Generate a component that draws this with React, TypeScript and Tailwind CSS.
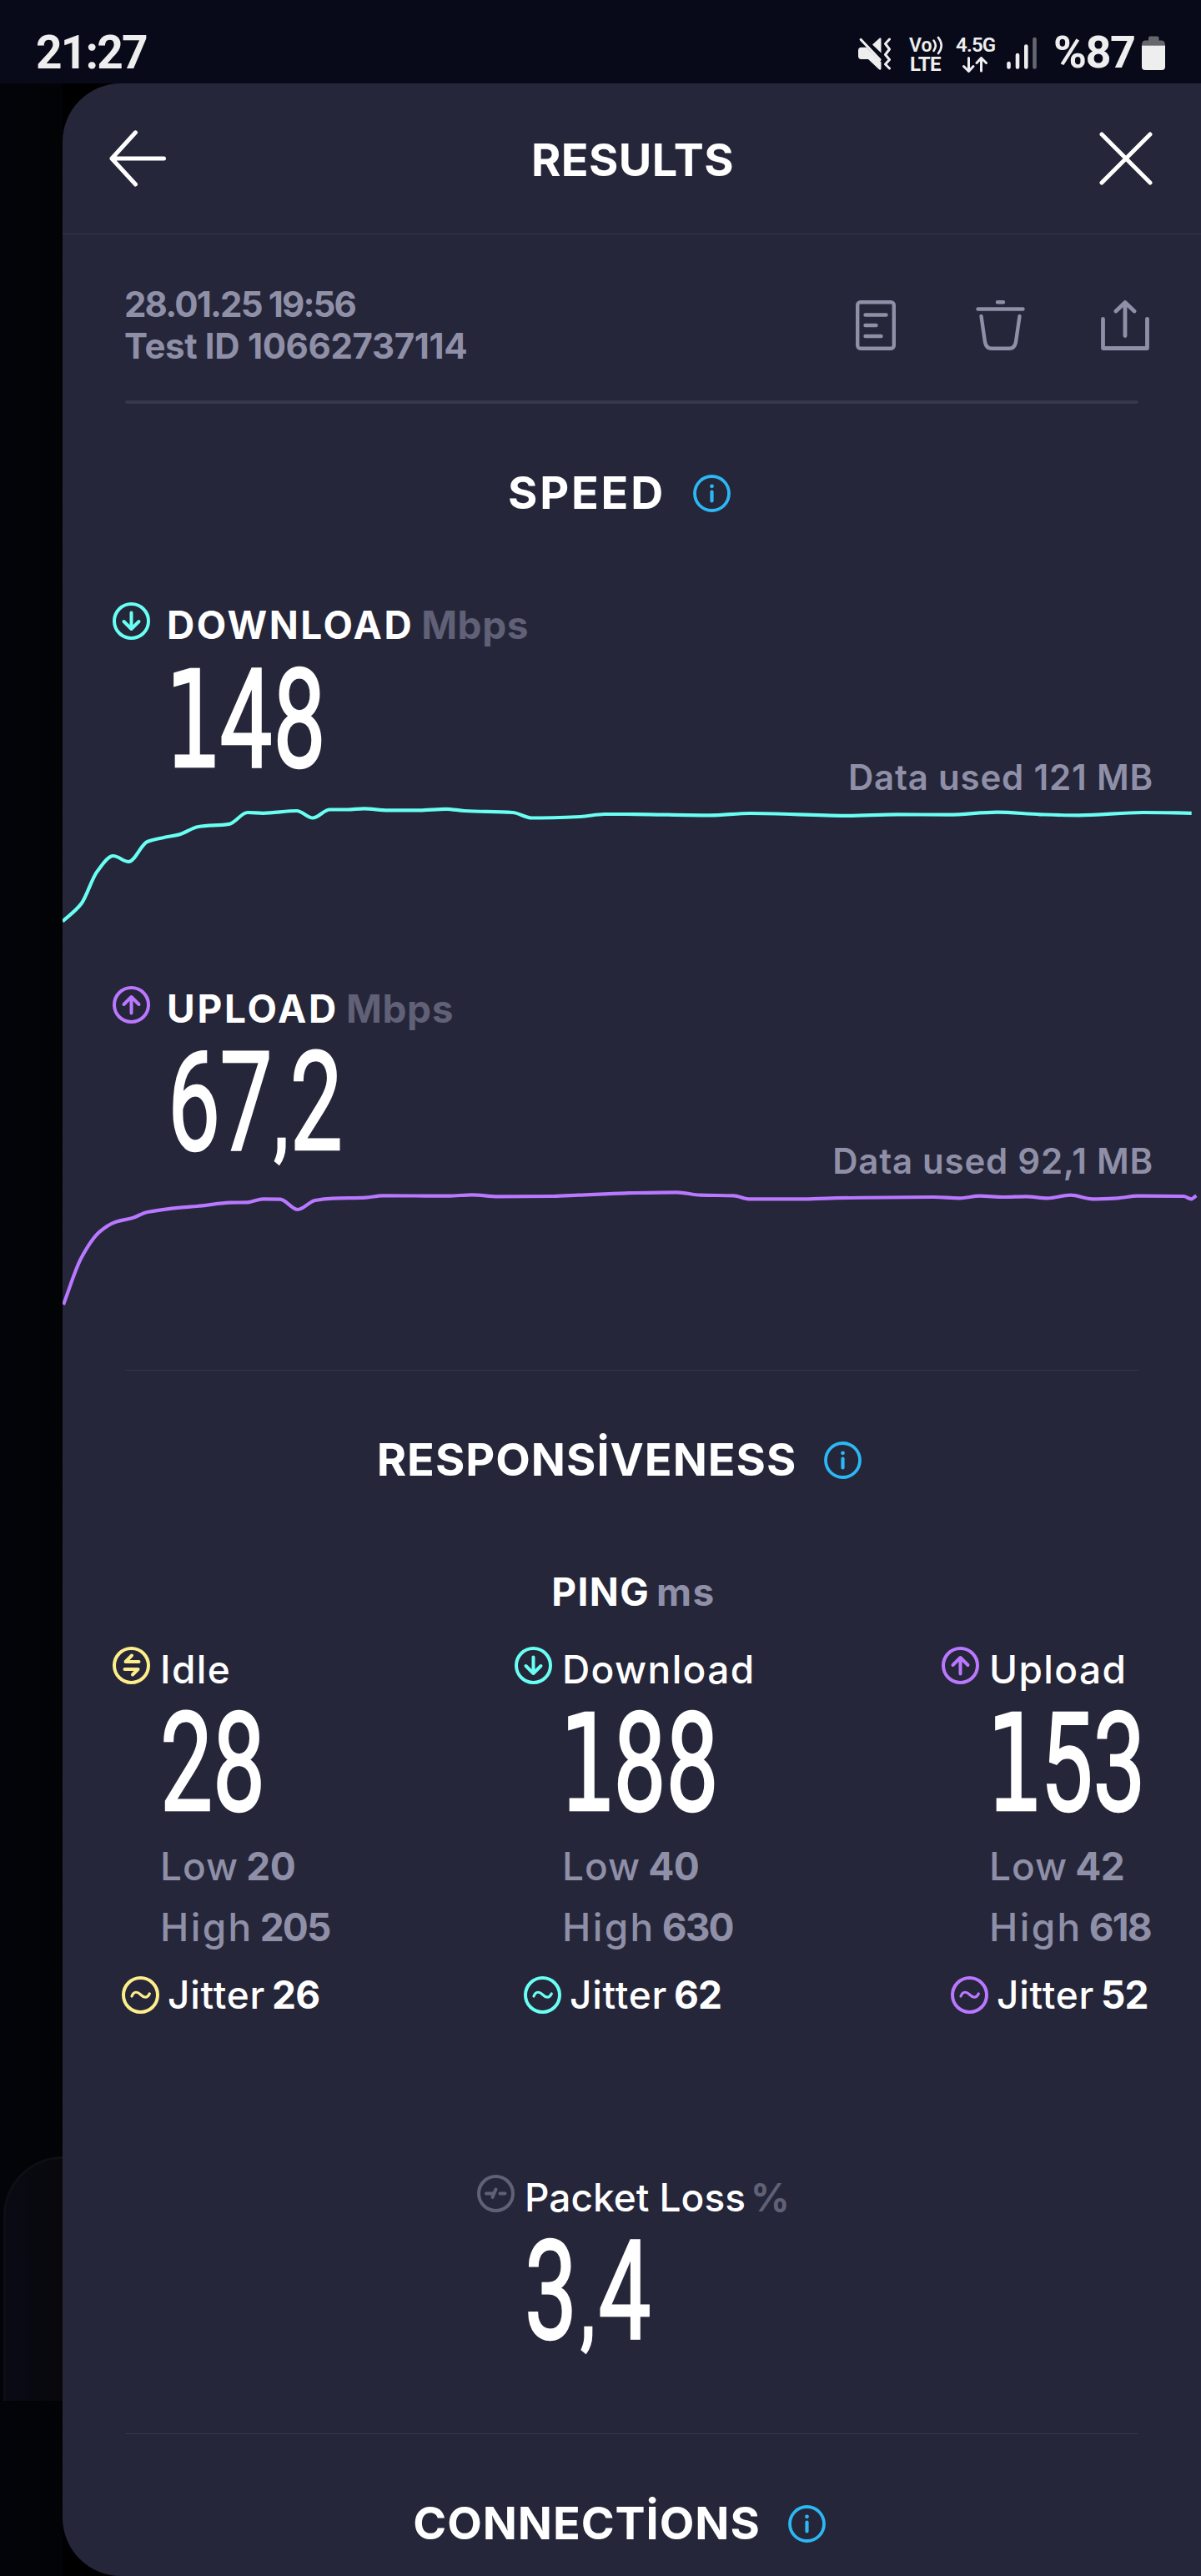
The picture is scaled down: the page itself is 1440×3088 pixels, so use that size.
import React from 'react';

type Point = [number, number];

const downloadPoints: Point[] = [
  [75, 1104.5], [97.4, 1083.4], [116.3, 1045], [135.7, 1026], [154.2, 1033], [176.6, 1009], [196.4, 1004],
  [215, 1000.4], [238, 991], [274.8, 987.8], [296.8, 974], [315.3, 974.8], [355.8, 972], [375, 980.5],
  [395.4, 970.5], [416.5, 970.5], [436.3, 969.4], [465, 971.3], [502, 971.3], [535, 969.8], [557, 972],
  [614.6, 974], [637.5, 980.5], [696, 979], [724.6, 976], [750, 976], [851, 977.4], [899.6, 975],
  [1014, 977.8], [1075.7, 976.3], [1137, 976.7], [1195.4, 973.6], [1247, 976.3], [1293.6, 977.4],
  [1370.6, 974], [1428.7, 974.8],
];

const uploadPoints: Point[] = [
  [76, 1564], [97.4, 1508], [119.4, 1476.7], [138.3, 1465], [159, 1460], [176.6, 1453], [218.5, 1447.3],
  [236, 1446], [275.7, 1441.7], [296.8, 1441.3], [315.3, 1437.3], [336, 1437.7], [357, 1450], [377.8, 1439],
  [399, 1436.7], [438.5, 1435.7], [458.3, 1433.3], [537.6, 1433.7], [566, 1432.3], [597, 1434.3],
  [663, 1434], [693.8, 1432.7], [750, 1430.3], [811.6, 1429.3], [840, 1432.7], [879.8, 1433.3],
  [897.4, 1437.3], [961, 1437.3], [996.5, 1436.3], [1119.7, 1435], [1150.5, 1436.3], [1174.7, 1433.7],
  [1203.3, 1435], [1229.8, 1434.3], [1256, 1436.3], [1283.5, 1432.7], [1310, 1437.3], [1339.8, 1436.3],
  [1364, 1433.7], [1419, 1434], [1428.3, 1437.3], [1434.4, 1433.3],
];

// Monotone smoothing: flat at every local peak, so the line never overshoots a sample
function smoothPath(pts: Point[]) {
  const slope = (i: number) => {
    if (i === 0 || i === pts.length - 1) return null;
    const a = (pts[i][1] - pts[i - 1][1]) / (pts[i][0] - pts[i - 1][0]);
    const b = (pts[i + 1][1] - pts[i][1]) / (pts[i + 1][0] - pts[i][0]);
    return a * b <= 0 ? 0 : (2 * a * b) / (a + b);
  };
  let d = `M${pts[0][0]} ${pts[0][1]}`;
  for (let i = 1; i < pts.length; i++) {
    const [x0, y0] = pts[i - 1];
    const [x1, y1] = pts[i];
    const h = (x1 - x0) / 3;
    const straight = (y1 - y0) / (x1 - x0);
    const s0 = slope(i - 1) ?? straight;
    const s1 = slope(i) ?? straight;
    d += ` C${x0 + h} ${y0 + s0 * h} ${x1 - h} ${y1 - s1 * h} ${x1} ${y1}`;
  }
  return d;
}

const glyphs = {
  down: 'M22.5 12.5V32 M13.5 23L22.5 32L31.5 23',
  up: 'M22.5 32.5V13 M13.5 22L22.5 13L31.5 22',
  idle: 'M31.5 18H15.5L23 10.5 M14.5 27H30.5L24 33.5',
  wave: 'M12 24C14.5 17.5 19 18.5 22.5 22S30.5 27 33.3 21',
  loss: 'M11 22.5H19 M18.5 27L22.5 17.5 M27.5 22.5H33.5',
};

function CircleIcon({ glyph, className }: { glyph: keyof typeof glyphs; className: string }) {
  return (
    <svg viewBox="0 0 45 45" className={`h-[45px] w-[45px] shrink-0 ${className}`} fill="none" stroke="currentColor" strokeLinecap="round" strokeLinejoin="round">
      <circle cx="22.5" cy="22.5" r="20.5" strokeWidth="4" />
      <path d={glyphs[glyph]} strokeWidth={glyph === 'wave' ? 3.2 : 4} />
    </svg>
  );
}

function InfoIcon() {
  return (
    <svg viewBox="0 0 45 45" className="h-[45px] w-[45px] shrink-0 text-[#2bb8f5]" fill="none" stroke="currentColor">
      <circle cx="22.5" cy="22.5" r="20.5" strokeWidth="3.8" />
      <circle cx="22.5" cy="13.8" r="2.4" fill="currentColor" stroke="none" />
      <path d="M22.5 20.5V31.5" strokeWidth="4.2" strokeLinecap="round" />
    </svg>
  );
}

// Tall, narrow figures; the 1 comes from a face that has a foot
function BigNumber({ value, className = '' }: { value: string; className?: string }) {
  return (
    <p className={`h-[120px] w-0 origin-left scale-x-[0.68] font-['Roboto',sans-serif] text-[165px] leading-[121px] font-normal whitespace-nowrap text-white [-webkit-text-stroke:2.5px_white] ${className}`}>
      {value.split(/([1,])/).map((part, i) => {
        if (part === '1') {
          return (
            <span key={i} className="-mx-[6px] font-['DejaVu_Sans',sans-serif] text-[161px]">1</span>
          );
        }
        if (part === ',') return <span key={i} className="px-[4px] text-[108px] font-semibold">,</span>;
        return part;
      })}
    </p>
  );
}

function SectionTitle({ text, className }: { text: string; className: string }) {
  return (
    <div className="flex h-[54px] items-center justify-center gap-[33px] pr-[30px]">
      <h2 className={`text-[54px] leading-[54px] font-bold text-white ${className}`}>{text}</h2>
      <InfoIcon />
    </div>
  );
}

function SpeedHeader({ glyph, color, label, tracking }: { glyph: 'down' | 'up'; color: string; label: string; tracking: string }) {
  return (
    <div className="flex h-[45px] items-start pl-[60px]">
      <CircleIcon glyph={glyph} className={color} />
      <div className="mt-1 ml-5 flex gap-[9px] text-[46px] leading-[46px] font-bold">
        <span className={`text-white ${tracking}`}>{label}</span>
        <span className="tracking-[0.6px] text-[#606077]">Mbps</span>
      </div>
    </div>
  );
}

interface PingProps {
  glyph: 'idle' | 'down' | 'up';
  color: string;
  label: string;
  ping: string;
  low: string;
  high: string;
  jitter: string;
  width: string;
}

const pings: PingProps[] = [
  { glyph: 'idle', color: 'text-[#fdee8b]', label: 'Idle', ping: '28', low: '20', high: '205', jitter: '26', width: 'w-[482px]' },
  { glyph: 'down', color: 'text-[#6afff3]', label: 'Download', ping: '188', low: '40', high: '630', jitter: '62', width: 'w-[512px]' },
  { glyph: 'up', color: 'text-[#b978ff]', label: 'Upload', ping: '153', low: '42', high: '618', jitter: '52', width: 'w-[260px]' },
];

function PingColumn({ glyph, color, label, ping, low, high, jitter, width }: PingProps) {
  return (
    <div className={`shrink-0 text-[46px] leading-[46px] font-medium ${width}`}>
      <div className="flex h-[45px] items-start gap-3">
        <CircleIcon glyph={glyph} className={color} />
        <span className="mt-1 tracking-[1.4px] text-white">{label}</span>
      </div>
      <div className="mt-[34px] pl-[57px]">
        <BigNumber value={ping} />
        <p className="mt-[41px] flex gap-[9px] text-[#8f8fa8]">
          <span className="tracking-[1px]">Low</span>
          <b className="font-bold tracking-[-0.5px]">{low}</b>
        </p>
        <p className="mt-[27px] flex gap-2 text-[#8f8fa8]">
          <span className="tracking-[2.4px]">High</span>
          <b className="font-bold tracking-[-1.8px]">{high}</b>
        </p>
      </div>
      <div className="mt-[36px] flex h-[45px] items-start pl-[11px]">
        <CircleIcon glyph="wave" className={color} />
        <p className="-mt-px ml-2.5 flex gap-2 text-white">
          <span className="tracking-[0.75px]">Jitter</span>
          <b className="font-bold tracking-[-0.8px]">{jitter}</b>
        </p>
      </div>
    </div>
  );
}

function StatusBar() {
  return (
    <div className="flex h-[100px] shrink-0 items-start justify-between bg-[#090a19] pl-[43px] font-['Roboto',sans-serif] text-[#eeeeee]">
      <span className="mt-[36px] text-[55px] leading-[54px] font-bold tracking-[-1.8px]">21:27</span>
      <div className="flex items-start pt-[43px] pr-[43px]">
        {/* Muted, vibrating */}
        <svg viewBox="0 0 39 41" className="h-[41px] w-[39px]" fill="currentColor">
          <path d="M0 17.5C0 15 1.5 13.8 3.5 13.8H10L27.5 31.5V39C27.3 41 26 41 25 40.3L12 28H3.5C1.5 28 0 26.8 0 24.5Z" />
          <path d="M17 10.5L25.5 2.8C26.6 2 27.5 2.5 27.5 3.8V20.5Z" />
          <path d="M3.2 4.5L26 28.5" stroke="currentColor" strokeWidth="3.2" strokeLinecap="round" />
          <path d="M37.5 4L32.5 9.5L37.5 16L32.5 22.5L37.5 28.5L32.5 34L37.5 39" fill="none" stroke="currentColor" strokeWidth="3" strokeLinecap="round" strokeLinejoin="round" />
        </svg>
        <div className="ml-[22px] w-[42px] text-[23px] leading-[23px] font-semibold">
          <div className="flex">
            <span>Vo</span>
            <svg viewBox="0 0 14 23" className="h-[23px] w-[14px]" fill="none" stroke="currentColor" strokeWidth="2.6" strokeLinecap="round">
              <path d="M2.5 5.5Q7 11.5 2.5 18" />
              <path d="M8 2Q15.5 11.5 8 21" />
            </svg>
          </div>
          <p className="pl-px text-[24px] font-bold tracking-[-0.6px]">LTE</p>
        </div>
        <div className="ml-[14px] w-[46px]">
          <p className="text-[24px] leading-[23px] font-semibold tracking-[-0.8px]">4.5G</p>
          <svg viewBox="0 0 30 19" className="mt-[2px] ml-2 h-[19px] w-[30px]" fill="none" stroke="currentColor" strokeWidth="3" strokeLinecap="round" strokeLinejoin="round">
            <path d="M7.5 1.5V17M1.5 11.5L7.5 17.5L13 11.5" />
            <path d="M22.5 17V2M17 7.5L22.5 1.5L28.5 7.5" />
          </svg>
        </div>
        <svg viewBox="0 0 36 40" className="ml-[15px] h-[40px] w-[36px]" stroke="currentColor" strokeWidth="4.6" strokeLinecap="round">
          <path d="M2.5 33V37.5M13 23V37.5M23.3 12.5V37.5" />
          <path d="M33.5 4V37.5" stroke="#66666f" />
        </svg>
        <span className="-mt-[7px] ml-5 w-[98px] text-[54px] leading-[54px] font-bold tracking-[-1.5px]">%87</span>
        <svg viewBox="0 0 28 41" className="ml-2 h-[41px] w-[28px]">
          <path d="M8 5V2.5Q8 0.5 10 0.5H18.5Q20.5 0.5 20.5 2.5V5.5H24Q28 5.5 28 11.5H0Q0 5.5 4 5.5H8Z" fill="#66666f" />
          <path d="M0 11.5H28V37Q28 41 24 41H4Q0 41 0 37Z" fill="currentColor" />
        </svg>
      </div>
    </div>
  );
}

export default function App() {
  return (
    <div className="flex h-[3088px] w-[1440px] flex-col overflow-hidden bg-[#030408] font-['Inter',sans-serif]">
      <StatusBar />
      <div className="flex h-[2988px] bg-black">
        {/* Dimmed screen behind the sheet */}
        <div className="flex w-[75px] shrink-0 flex-col bg-linear-to-r from-[#03040a] to-[#020305] pt-[2485px] pl-1">
          <div className="h-[293px] w-[71px] rounded-tl-[75px] border-t-[3px] border-l-[3px] border-[#0e0f14] bg-linear-to-r from-[#090a14] to-[#08080c]" />
        </div>

        <main className="h-[2988px] w-[1365px] overflow-hidden rounded-l-[70px] bg-[#252639]">
          <header className="flex h-[181px] items-center justify-between border-b border-[#37374c] pr-[58px] pl-[56px] text-white">
            <svg viewBox="0 0 68 68" className="h-[68px] w-[68px]" fill="none" stroke="currentColor" strokeWidth="5" strokeLinecap="round" strokeLinejoin="round">
              <path d="M65.5 34H3M31.5 2.8L3 34L31.5 65" />
            </svg>
            <h1 className="mt-1 text-[54px] leading-[54px] font-bold tracking-[0.4px]">RESULTS</h1>
            <svg viewBox="0 0 64 64" className="h-[64px] w-[64px]" stroke="currentColor" strokeWidth="5" strokeLinecap="round">
              <path d="M3 3L61 61M61 3L3 61" />
            </svg>
          </header>

          <div className="flex h-[199px] items-start justify-between pt-[59px] pr-[62px] pl-[74px] text-[#8f8fa8]">
            <div className="text-[42px] leading-[50px] font-bold">
              <p className="tracking-[-1.85px]">28.01.25 19:56</p>
              <p className="tracking-[-0.35px]">Test ID 10662737114</p>
            </div>
            <div className="mt-5 flex items-start">
              <svg viewBox="0 0 48 60" className="h-[60px] w-[48px]" fill="none" stroke="currentColor" strokeWidth="4.4" strokeLinecap="round">
                <rect x="2.2" y="2.2" width="43.6" height="55.6" rx="3.5" />
                <path d="M11.5 17.5H36.5M11.5 30H24.5M11.5 43H30.5" />
              </svg>
              <svg viewBox="0 0 59 60" className="ml-24 h-[60px] w-[59px]" fill="none" stroke="currentColor" strokeWidth="4.4" strokeLinecap="round">
                <path d="M26 2.2H33M2.5 10.5H56.5" />
                <path d="M6.5 19L11 50Q12.5 57.8 19 57.8H40Q46.5 57.8 48 50L52.5 19" />
              </svg>
              <svg viewBox="0 0 58 60" className="ml-[91px] h-[60px] w-[58px]" fill="none" stroke="currentColor" strokeWidth="4.8" strokeLinecap="round" strokeLinejoin="round">
                <path d="M2.5 22.5V57.5H55.5V22.5M29 42.5V3M18 13L29 2.5L40 13" />
              </svg>
            </div>
          </div>
          <div className="mx-[75px] h-1 rounded-full bg-[#37374c]" />

          {/* Speed */}
          <section className="pt-20">
            <SectionTitle text="SPEED" className="tracking-[2.8px]" />

            <div className="mt-[104px]">
              <SpeedHeader glyph="down" color="text-[#6afff3]" label="DOWNLOAD" tracking="tracking-[2.5px]" />
              <div className="mt-[35px] flex h-[151px] justify-between pr-[57px] pl-[126px]">
                <BigNumber value="148" className="tracking-[1.5px]" />
                <p className="self-end text-[42px] leading-[42px] font-semibold tracking-[0.8px] text-[#8f8fa8]">Data used 121 MB</p>
              </div>
              <svg viewBox="75 960 1365 160" className="mt-[7px] h-[160px] w-[1365px]" fill="none" stroke="#6afff3" strokeWidth="4.2">
                <path d={smoothPath(downloadPoints)} />
              </svg>
            </div>

            <div className="mt-[62px]">
              <SpeedHeader glyph="up" color="text-[#b978ff]" label="UPLOAD" tracking="tracking-[2.8px]" />
              <div className="mt-[34px] flex h-[152px] justify-between pr-[57px] pl-[126px]">
                <BigNumber value="67,2" className="tracking-[-1px]" />
                <p className="self-end text-[42px] leading-[42px] font-semibold tracking-[0.75px] text-[#8f8fa8]">Data used 92,1 MB</p>
              </div>
              <svg viewBox="75 1420 1365 160" className="mt-[7px] h-[160px] w-[1365px]" fill="none" stroke="#b978ff" strokeWidth="4.2">
                <path d={smoothPath(uploadPoints)} />
              </svg>
            </div>
          </section>
          <div className="mx-[75px] mt-[62px] h-px bg-[#37374c]" />

          {/* Responsiveness */}
          <section className="pt-[80px]">
            <SectionTitle text="RESPONSİVENESS" className="tracking-[1px]" />
            <p className="mt-[108px] flex justify-center gap-2 pl-[4px] text-[46px] leading-[46px] font-bold text-white">
              <span className="tracking-[1.4px]">PING</span>
              <span className="tracking-[1.5px] text-[#8f8fa8]">ms</span>
            </p>
            <div className="mt-[43px] flex pl-[60px]">
              {pings.map((p) => (
                <PingColumn key={p.label} {...p} />
              ))}
            </div>

            <div className="mt-[193px] pl-[497px]">
              <div className="flex h-[45px] items-start">
                <CircleIcon glyph="loss" className="text-[#606077]" />
                <p className="mt-1 ml-3 flex gap-1.5 text-[46px] leading-[46px] font-medium text-white">
                  <span>Packet Loss</span>
                  <span className="font-bold text-[#606077]">%</span>
                </p>
              </div>
              <div className="mt-[34px] pl-[57px]">
                <BigNumber value="3,4" className="tracking-[2px]" />
              </div>
            </div>
          </section>
          <div className="mx-[75px] mt-[111px] h-px bg-[#37374c]" />

          {/* Connections */}
          <section className="pt-[80px]">
            <SectionTitle text="CONNECTİONS" className="tracking-[0.95px]" />
          </section>
        </main>
      </div>
    </div>
  );
}
